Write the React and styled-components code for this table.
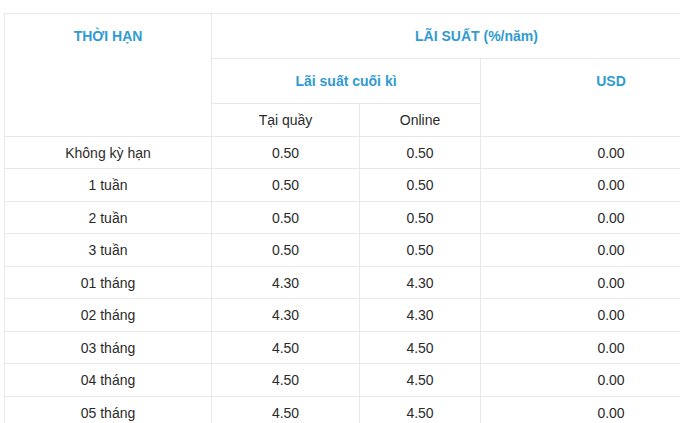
import React from "react";
import styled, { createGlobalStyle } from "styled-components";

const Global = createGlobalStyle`
  html, body { margin: 0; padding: 0; background: #fff; overflow: hidden; }
  body { font-family: "Liberation Sans", Arial, sans-serif; }
`;

const Page = styled.div`
  width: 680px;
  height: 423px;
  overflow: hidden;
  padding: 13px 0 0 4px;
  box-sizing: border-box;
`;

const Table = styled.table`
  width: 737px;
  table-layout: fixed;
  border-collapse: collapse;
  font-size: 14px;
  color: #2b2b2b;
`;

const Head = styled.th`
  border: 1px solid #e8e8e8;
  color: #2f9bd2;
  font-weight: bold;
  font-size: 14px;
  text-align: center;
  padding: 0;
  vertical-align: ${(p) => (p.$top ? "top" : "middle")};
  padding-top: ${(p) => (p.$top ? "14px" : "0")};
  height: ${(p) => p.$h || "auto"};
  box-sizing: border-box;
`;

const Sub = styled.th`
  border: 1px solid #e8e8e8;
  font-weight: normal;
  color: #2b2b2b;
  font-size: 14px;
  text-align: center;
  padding: 0;
  height: 33px;
  box-sizing: border-box;
`;

const Row = styled.tr`
  height: ${(p) => (p.$odd ? "32px" : "33px")};
`;

const Cell = styled.td`
  border: 1px solid #e8e8e8;
  text-align: center;
  padding: 0;
`;

const rows = [
  ["Không kỳ hạn", "0.50", "0.50", "0.00"],
  ["1 tuần", "0.50", "0.50", "0.00"],
  ["2 tuần", "0.50", "0.50", "0.00"],
  ["3 tuần", "0.50", "0.50", "0.00"],
  ["01 tháng", "4.30", "4.30", "0.00"],
  ["02 tháng", "4.30", "4.30", "0.00"],
  ["03 tháng", "4.50", "4.50", "0.00"],
  ["04 tháng", "4.50", "4.50", "0.00"],
  ["05 tháng", "4.50", "4.50", "0.00"],
];

export default function App() {
  return (
    <>
      <Global />
      <Page>
        <Table>
          <colgroup>
            <col style={{ width: 207 }} />
            <col style={{ width: 148 }} />
            <col style={{ width: 121 }} />
            <col style={{ width: 261 }} />
          </colgroup>
          <thead>
            <tr>
              <Head rowSpan={3} $top>THỜI HẠN</Head>
              <Head colSpan={3} $h="45px">LÃI SUẤT (%/năm)</Head>
            </tr>
            <tr>
              <Head colSpan={2} $h="45px">Lãi suất cuối kì</Head>
              <Head rowSpan={2} $top>USD</Head>
            </tr>
            <tr>
              <Sub>Tại quầy</Sub>
              <Sub>Online</Sub>
            </tr>
          </thead>
          <tbody>
            {rows.map((r, i) => (
              <Row key={i} $odd={i % 2 === 0}>
                {r.map((c, j) => (
                  <Cell key={j}>{c}</Cell>
                ))}
              </Row>
            ))}
          </tbody>
        </Table>
      </Page>
    </>
  );
}
